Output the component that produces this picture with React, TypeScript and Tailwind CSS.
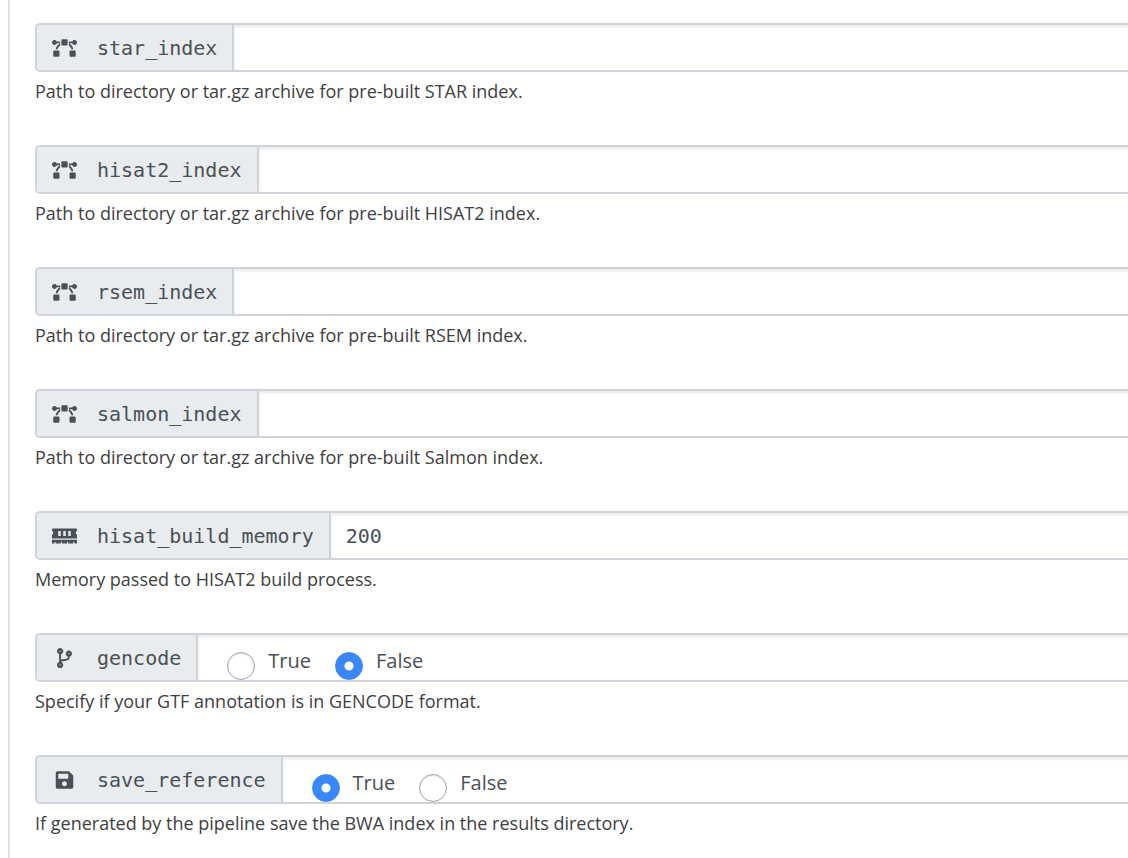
import { useState } from "react";
import type { ReactNode } from "react";
import type { IconType } from "react-icons";
import { FaBezierCurve, FaCodeBranch, FaMemory, FaSave } from "react-icons/fa";

type Param = {
  name: string;
  icon: IconType;
  help: string;
  kind: "text" | "boolean";
  value: string;
};

const params: Param[] = [
  { name: "star_index", icon: FaBezierCurve, help: "Path to directory or tar.gz archive for pre-built STAR index.", kind: "text", value: "" },
  { name: "hisat2_index", icon: FaBezierCurve, help: "Path to directory or tar.gz archive for pre-built HISAT2 index.", kind: "text", value: "" },
  { name: "rsem_index", icon: FaBezierCurve, help: "Path to directory or tar.gz archive for pre-built RSEM index.", kind: "text", value: "" },
  { name: "salmon_index", icon: FaBezierCurve, help: "Path to directory or tar.gz archive for pre-built Salmon index.", kind: "text", value: "" },
  { name: "hisat_build_memory", icon: FaMemory, help: "Memory passed to HISAT2 build process.", kind: "text", value: "200" },
  { name: "gencode", icon: FaCodeBranch, help: "Specify if your GTF annotation is in GENCODE format.", kind: "boolean", value: "False" },
  { name: "save_reference", icon: FaSave, help: "If generated by the pipeline save the BWA index in the results directory.", kind: "boolean", value: "True" },
];

const addonClass =
  "flex shrink-0 items-center gap-5 border-r-2 border-[#ced4da] bg-[#e9ecef] px-[15px] font-['DejaVu_Sans_Mono',monospace] text-xl leading-[30px]";

function AddonContent({ icon: Icon, children }: { icon: IconType; children: ReactNode }) {
  return (
    <>
      <Icon className="h-5 w-[25px] shrink-0" aria-hidden="true" />
      <span>{children}</span>
    </>
  );
}

function ParamField({ param }: { param: Param }) {
  const [value, setValue] = useState(param.value);
  const helpId = `${param.name}-help`;

  return (
    <div>
      <div className="flex h-[49px] overflow-hidden rounded-l-[5px] border-2 border-r-0 border-[#ced4da] bg-white text-[#495057]">
        {param.kind === "text" ? (
          <>
            <label htmlFor={param.name} className={addonClass}>
              <AddonContent icon={param.icon}>{param.name}</AddonContent>
            </label>
            <input
              id={param.name}
              type="text"
              value={value}
              onChange={(e) => setValue(e.target.value)}
              aria-describedby={helpId}
              className="-mr-1 min-w-0 flex-1 px-[15px] font-['DejaVu_Sans_Mono',monospace] text-xl leading-[30px] shadow-[inset_0_2px_3px_rgba(0,0,0,0.09)] outline-none"
            />
          </>
        ) : (
          <>
            <div id={`${param.name}-label`} className={addonClass}>
              <AddonContent icon={param.icon}>{param.name}</AddonContent>
            </div>
            <div
              role="radiogroup"
              aria-labelledby={`${param.name}-label`}
              aria-describedby={helpId}
              className="-mr-1 flex flex-1 items-end gap-6 pl-[29px] font-['Open_Sans',sans-serif] text-xl leading-[30px] shadow-[inset_0_2px_3px_rgba(0,0,0,0.09)]"
            >
              {["True", "False"].map((option) => (
                <label key={option} className="flex items-end gap-[13px]">
                  <input
                    type="radio"
                    name={param.name}
                    value={option}
                    checked={value === option}
                    onChange={() => setValue(option)}
                    className="size-7 appearance-none rounded-full border border-[#a3a3a3] bg-white shadow-[inset_0_1px_2px_rgba(0,0,0,0.12)] checked:border-[#3a86fd] checked:bg-[radial-gradient(circle,#ffffff_0_4px,#3a86fd_5px)] checked:shadow-none"
                  />
                  <span className="pb-1">{option}</span>
                </label>
              ))}
            </div>
          </>
        )}
      </div>
      <p id={helpId} className="mt-[5px] font-['Open_Sans',sans-serif] text-lg leading-7 text-[#404040]">
        {param.help}
      </p>
    </div>
  );
}

export default function App() {
  return (
    <main className="flex min-h-screen bg-white pl-2">
      <form className="flex min-w-0 flex-1 flex-col gap-10 border-l-2 border-[#dfdfdf] pt-[23px] pb-[2px] pl-[25px]">
        {params.map((param) => (
          <ParamField key={param.name} param={param} />
        ))}
      </form>
    </main>
  );
}
